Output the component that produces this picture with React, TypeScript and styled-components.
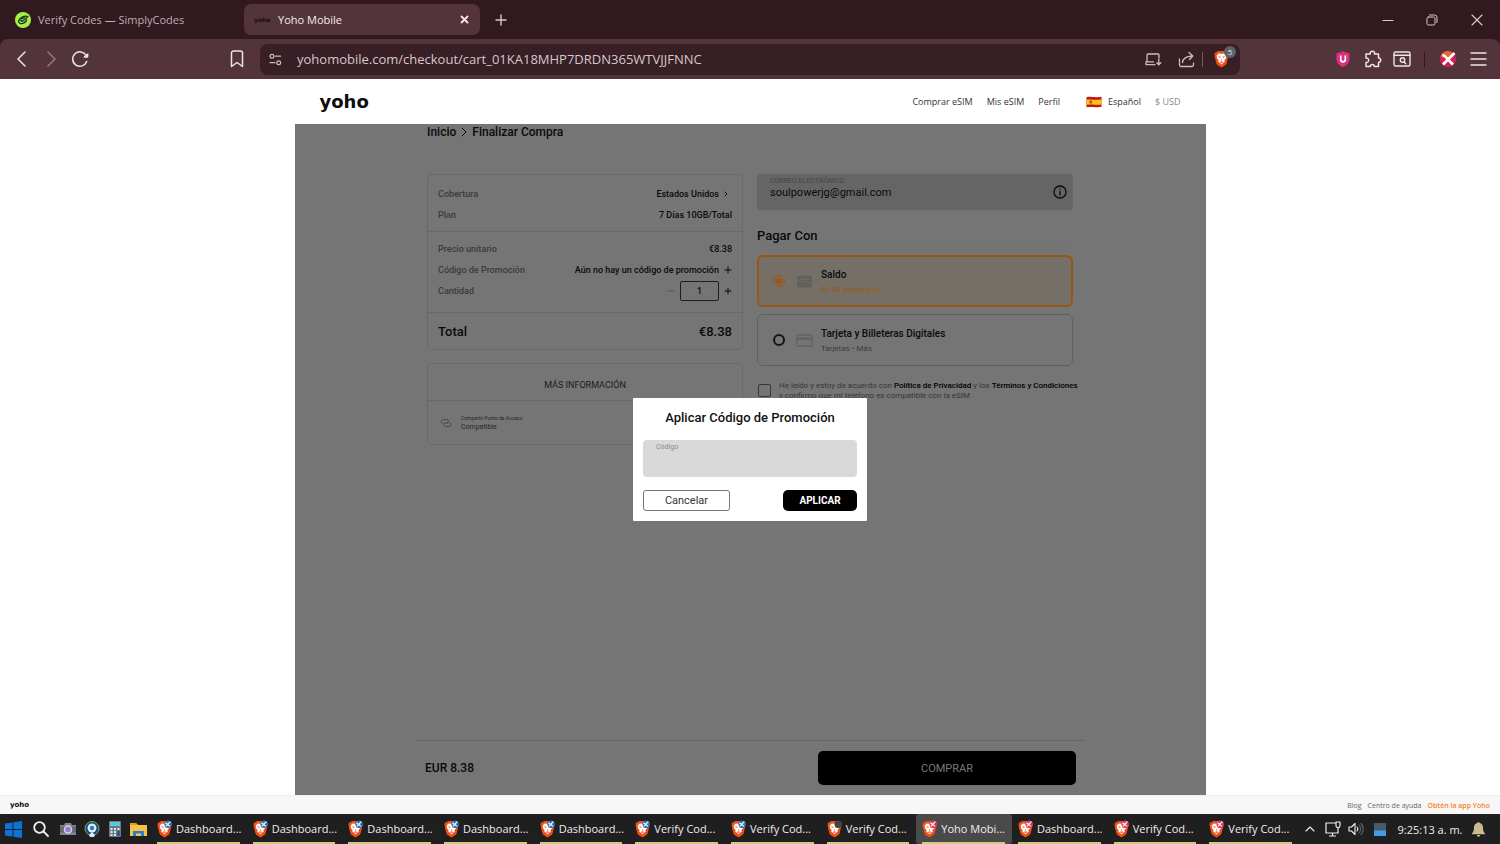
import React from "react";
import styled, { createGlobalStyle } from "styled-components";

const ui = `"Open Sans", "Noto Sans", sans-serif`;
const brand = `Roboto, "Liberation Sans", sans-serif`;

const Global = createGlobalStyle`
  *, *::before, *::after { box-sizing: border-box; }
  body { margin: 0; background: #fff; font-family: ${ui}; }
  button, input { font: inherit; color: inherit; margin: 0; }
  button { background: none; border: 0; padding: 0; cursor: pointer; }
  a { color: inherit; text-decoration: none; }
  svg { display: block; flex: none; }
  p, h1, h2 { margin: 0; }
`;

const Screen = styled.div`
  display: flex;
  flex-direction: column;
  min-height: 100vh;
`;

/* ---------- browser chrome ---------- */

const Chrome = styled.header`
  background: #32191f;
  color: #d9c9cc;
`;

const TabStrip = styled.div`
  display: flex;
  align-items: center;
  height: 39px;
  padding-left: 8px;
`;

const Tab = styled.div<{ $active?: boolean }>`
  display: flex;
  align-items: center;
  gap: ${(p) => (p.$active ? 6 : 7)}px;
  width: 236px;
  height: 31px;
  padding: 0 10px 0 ${(p) => (p.$active ? 10 : 7)}px;
  border-radius: 7px;
  font-size: 11px;
  color: ${(p) => (p.$active ? "#f4ecee" : "#bfaeb2")};
  background: ${(p) => (p.$active ? "#53343a" : "transparent")};
`;

const TabTitle = styled.span`
  flex: 1;
  white-space: nowrap;
`;

const TabLogo = styled.span`
  width: 18px;
  font: 700 6px "DejaVu Sans", sans-serif;
  color: #1b0c10;
`;

const IconButton = styled.button<{ $w?: number; $dim?: boolean }>`
  display: flex;
  align-items: center;
  justify-content: center;
  width: ${(p) => p.$w ?? 30}px;
  height: 30px;
  flex: none;
  opacity: ${(p) => (p.$dim ? 0.4 : 1)};
`;

const Push = styled.div`
  margin-left: auto;
  display: flex;
  align-items: center;
`;

const Toolbar = styled.div`
  display: flex;
  align-items: center;
  height: 40px;
  background: #53343a;
  border-radius: 8px 8px 0 0;
  color: #efe4e6;
`;

const NavGroup = styled.div`
  display: flex;
  align-items: center;
  width: 260px;
  padding: 0 8px 0 7px;
`;

const Address = styled.div`
  display: flex;
  align-items: center;
  flex: 1;
  height: 31px;
  border-radius: 8px;
  background: #371f25;
  color: #cdbdc0;
`;

const AddressInput = styled.input`
  flex: 1;
  min-width: 0;
  padding: 0 0 1px 6px;
  border: 0;
  outline: 0;
  background: none;
  font-size: 13px;
  color: #d6c8cb;
`;

const Divider = styled.span<{ $c: string }>`
  width: 1px;
  height: 15px;
  background: ${(p) => p.$c};
`;

const Shield = styled.button`
  position: relative;
  display: flex;
  width: 37px;
  padding-left: 11px;
`;

const Badge = styled.span`
  position: absolute;
  left: 21px;
  top: -4px;
  width: 12px;
  height: 12px;
  border-radius: 6px;
  background: #5b626b;
  color: #e8e8e8;
  font-size: 8px;
  line-height: 12px;
  text-align: center;
`;

const ExtGroup = styled.div`
  display: flex;
  align-items: center;
  justify-content: flex-end;
  width: 260px;
  padding-right: 7px;
`;

/* ---------- site ---------- */

const Site = styled.div`
  flex: 1;
  display: flex;
  flex-direction: column;
  font-family: ${brand};
`;

const SiteHeader = styled.header`
  display: flex;
  align-items: center;
  width: 100%;
  max-width: 911px;
  height: 45px;
  margin: 0 auto;
  padding: 0 25px;
  font-family: ${ui};
`;

const Wordmark = styled.a<{ $size: number }>`
  font: 700 ${(p) => p.$size}px "DejaVu Sans", sans-serif;
  line-height: 1;
  color: #0c0c0c;
`;

const SiteNav = styled.nav`
  display: flex;
  align-items: center;
  gap: 14px;
  margin-left: auto;
  font-size: 9px;
  color: #333;
`;

const Locale = styled.button`
  display: flex;
  align-items: center;
  gap: 6px;
  margin-left: 12px;
`;

const Currency = styled.button`
  color: #8a8a8a;
`;

/* The checkout sits on a muted sheet while the promotion dialog is open. */
const Stage = styled.main`
  position: relative;
  flex: 1;
  display: flex;
  flex-direction: column;
  width: 100%;
  max-width: 911px;
  margin: 0 auto;
  background: #c3c3c3;
  color: #111;
`;

const Content = styled.div`
  width: 100%;
  max-width: 646px;
  margin: 0 auto;
`;

const Crumbs = styled.nav`
  display: flex;
  align-items: center;
  gap: 5px;
  height: 15px;
  font-size: 12px;
  font-weight: 500;
`;

const Columns = styled.div`
  display: grid;
  grid-template-columns: repeat(2, minmax(0, 1fr));
  gap: 14px;
  align-items: start;
  padding-top: 35px;
`;

const Card = styled.section`
  border: 1px solid #b0b0b0;
  border-radius: 5px;
  margin-bottom: 13px;
`;

const Rows = styled.div`
  padding: 8px 10px 6px;
  border-bottom: 1px solid #b0b0b0;
  & + & { padding: 6px 10px 11px; }
`;

const Row = styled.div`
  display: flex;
  align-items: center;
  justify-content: space-between;
  height: 21px;
  font-size: 9px;
  color: #636363;
  font-weight: 500;
`;

const Value = styled.span`
  display: flex;
  align-items: center;
  gap: 5px;
  color: #111;
`;

const Quantity = styled.input`
  width: 39px;
  height: 20px;
  border: 1px solid #333;
  border-radius: 2px;
  background: none;
  text-align: center;
`;

const TotalRow = styled.div`
  display: flex;
  align-items: center;
  justify-content: space-between;
  height: 36px;
  padding: 0 10px;
  font-size: 13px;
  font-weight: 500;
`;

const InfoHeading = styled.h2`
  height: 37px;
  padding-top: 4px;
  border-bottom: 1px solid #b0b0b0;
  text-align: center;
  font-size: 9px;
  font-weight: 400;
  line-height: 35px;
  color: #333;
`;

const Feature = styled.div`
  display: flex;
  align-items: center;
  gap: 9px;
  height: 43px;
  padding: 0 12px;
  font-size: 7px;
  line-height: 10px;
  color: #444;
`;

const FeatureName = styled.span`
  display: block;
  font-size: 5px;
  line-height: 8px;
`;

const Email = styled.div`
  display: flex;
  align-items: center;
  height: 36px;
  padding: 0 6px 0 13px;
  border-radius: 3px;
  background: #a8a8a8;
`;

const FieldBody = styled.div`
  flex: 1;
  display: flex;
  flex-direction: column;
  align-self: flex-start;
  padding-top: 3px;
`;

const FieldLabel = styled.label<{ $muted?: boolean }>`
  font-size: 7px;
  line-height: 9px;
  color: ${(p) => (p.$muted ? "#737373" : "#8a8a8a")};
`;

const FieldInput = styled.input`
  width: 100%;
  height: 13px;
  padding: 0;
  border: 0;
  outline: 0;
  background: none;
  font-size: 11px;
`;

const PayTitle = styled.h2`
  margin: 18px 0 10px;
  border-bottom: 1px solid #bcbcbc;
  font-size: 13px;
  font-weight: 500;
  line-height: 16px;
`;

const Option = styled.label<{ $on?: boolean }>`
  display: flex;
  align-items: center;
  height: 52px;
  margin-bottom: 7px;
  padding: 0 14px;
  border: ${(p) => (p.$on ? "2px solid #fc921e" : "1px solid #9aa0a1")};
  border-radius: 6px;
  background: ${(p) => (p.$on ? "#c5b9ad" : "transparent")};
  & + & { padding: 0 15px; }
`;

const Radio = styled.input`
  appearance: none;
  width: 12px;
  height: 12px;
  margin-right: 11px;
  border: 2px solid #222;
  border-radius: 6px;
  &:checked {
    border: 1px solid #ff9420;
    background: radial-gradient(circle, #ff9420 3px, transparent 4px);
  }
`;

const OptionText = styled.span`
  display: flex;
  flex-direction: column;
  gap: 3px;
  margin-left: 8px;
  padding-top: 1px;
`;

const OptionTitle = styled.span`
  font-size: 10px;
  font-weight: 500;
  line-height: 13px;
`;

const OptionNote = styled.span<{ $on?: boolean }>`
  font-size: 8px;
  line-height: 12px;
  color: ${(p) => (p.$on ? "#ff9420" : "#666")};
`;

const Terms = styled.label`
  display: flex;
  gap: 8px;
  padding: 8px 0 0 1px;
  font-size: 8px;
  line-height: 10px;
  white-space: nowrap;
  color: #5c5c5c;
  a { font-weight: 500; color: #000; }
`;

const Check = styled.input`
  appearance: none;
  width: 13px;
  height: 13px;
  margin-top: 3px;
  flex: none;
  border: 1px solid #5c5c5c;
  border-radius: 2px;
`;

const BuyBar = styled.div`
  display: flex;
  align-items: center;
  justify-content: space-between;
  width: 100%;
  max-width: 668px;
  height: 55px;
  margin: auto auto 0;
  padding: 0 8px 0 9px;
  border-top: 1px solid #a8a8a8;
  font-size: 12px;
  font-weight: 500;
`;

const Buy = styled.button`
  width: 258px;
  height: 34px;
  border-radius: 5px;
  background: #000;
  color: #c3c3c3;
  font-size: 11px;
  font-weight: 400;
`;

const Backdrop = styled.div`
  position: absolute;
  inset: 0;
  display: flex;
  align-items: center;
  justify-content: center;
  background: rgba(0, 0, 0, 0.4);
`;

const Dialog = styled.form`
  width: 234px;
  padding: 10px;
  border-radius: 1px;
  background: #fff;
`;

const DialogTitle = styled.h1`
  font-size: 13px;
  font-weight: 500;
  line-height: 19px;
  text-align: center;
`;

const CodeField = styled.div`
  display: flex;
  height: 37px;
  margin: 13px 0;
  padding: 0 13px;
  border-radius: 4px;
  background: #d9d9d9;
`;

const Actions = styled.div`
  display: flex;
  justify-content: space-between;
`;

const Cancel = styled.button`
  width: 87px;
  height: 21px;
  border: 1px solid #777;
  border-radius: 3px;
  font-size: 11px;
  color: #333;
`;

const Apply = styled.button`
  width: 74px;
  height: 21px;
  border-radius: 5px;
  background: #000;
  color: #fff;
  font-size: 10px;
  font-weight: 700;
`;

const SiteFooter = styled.footer`
  display: flex;
  align-items: center;
  gap: 6px;
  height: 19px;
  padding: 0 10px;
  border-top: 1px solid #eee;
  background: #f7f7f7;
  font-family: ${ui};
  font-size: 7px;
  color: #666;
`;

const FooterLink = styled.a<{ $accent?: boolean; $first?: boolean }>`
  margin-left: ${(p) => (p.$first ? "auto" : "0")};
  color: ${(p) => (p.$accent ? "#f5821f" : "#666")};
  font-weight: ${(p) => (p.$accent ? 600 : 400)};
`;

/* ---------- taskbar ---------- */

const Taskbar = styled.footer`
  display: flex;
  height: 30px;
  background: #1f1f1f;
  color: #eee;
  font-size: 11px;
`;

const Launchers = styled.div`
  display: flex;
  align-items: center;
  width: 151px;
  padding-left: 1px;
`;

const Windows = styled.div`
  flex: 1;
  min-width: 0;
  display: grid;
  grid-template-columns: repeat(12, minmax(0, 1fr));
`;

const WindowButton = styled.button<{ $active?: boolean }>`
  display: flex;
  padding: 0 7px 0 6px;
  border-radius: 3px;
  background: ${(p) => (p.$active ? "#4a4a4a" : "transparent")};
`;

const WindowLabel = styled.span`
  display: flex;
  align-items: center;
  gap: 4px;
  width: 100%;
  height: 30px;
  padding-top: 1px;
  border-bottom: 2px solid #cfcb7e;
  white-space: nowrap;
`;

const Tray = styled.div`
  display: flex;
  align-items: center;
  width: 201px;
  padding-left: 2px;
`;

const Clock = styled.time`
  width: 70px;
  text-align: center;
  white-space: nowrap;
`;

/* ---------- icons ---------- */

type LineProps = { w?: number; h?: number; box?: string; sw?: number; children: React.ReactNode };
const Line = ({ w = 16, h = 16, box = "0 0 16 16", sw = 1.3, children }: LineProps) => (
  <svg width={w} height={h} viewBox={box} fill="none" stroke="currentColor" strokeWidth={sw} strokeLinecap="round" strokeLinejoin="round" aria-hidden>
    {children}
  </svg>
);

const BraveIcon = ({ mark }: { mark?: string }) => (
  <svg width="15" height="18" viewBox="0 0 14 17" aria-hidden>
    <path d="M3.6 1h6.8l1.1 1.2 1.3-.1.9 1.8-.4 1.3.2.8-1.6 6.3c-.3 1-.8 1.5-1.5 2L7 16.6l-3.4-2.3c-.7-.5-1.2-1-1.5-2L.5 6l.2-.8L.3 3.9l.9-1.8 1.3.1z" fill="#f04e16" />
    <path d="M4.300 3.200L7 3.600l2.700-.4 2 2.300-.5 1 .2 1-1.700 2.200.3 1.300-1.500 1.100L7 13.800l-1.500-1.700L4 11l.3-1.300-1.700-2.200.2-1-.5-1z" fill="#fff" />
    <path d="M4 6.100l2.100.4-.6.900zM10 6.100l-2.100.4.6.900zM6.400 9.200h1.200L7 10zM5.600 11.300L7 10.900l1.400.4-1.400.9z" fill="#f04e16" stroke="#f04e16" strokeWidth=".3" />
    {mark && (
      <g>
        <circle cx="10.500" cy="4" r="3.500" fill={mark} />
        {mark !== "#444" && <path d="M8 2.600l4.200 3.400M12.500 1.500L8.300 6" stroke="#fff" strokeWidth="1.100" />}
      </g>
    )}
  </svg>
);

const SimplyIcon = () => (
  <svg width="16" height="16" viewBox="0 0 16 16" fill="none" aria-hidden>
    <circle cx="8" cy="8" r="8" fill="#a4f04a" />
    <path d="M13 4.500c-2-.6-5-.3-7.300 1.500C3.500 7.800 2.800 10.500 5 11.300c2.500.8 6-.8 6.500-3.300M5.500 8.300l1.700 1.200L12 5.500M6.500 7l3-1.500" stroke="#17351b" strokeWidth="1.300" strokeLinecap="round" />
  </svg>
);

const Flag = () => (
  <svg width="16" height="12" viewBox="0 0 16 12" aria-hidden>
    <path d="M.5 1.200C4 0 8 2 15.500.8v10C11 12 8 10.200.5 11.200z" fill="#c8151d" />
    <path d="M.5 3.800C4 2.800 8 4.500 15.500 3.400v5C11 9.300 8 7.800.5 8.700z" fill="#fbc50f" />
    <path d="M3.500 4.500h2.600v3H3.500z" fill="#b5582a" />
  </svg>
);

const Plus = () => <Line w={8} h={8} box="0 0 8 8" sw={1}><path d="M4 1v6M1 4h6" /></Line>;
const Minus = () => <Line w={8} h={8} box="0 0 8 8" sw={1}><path d="M1 4h6" stroke="#8f8f8f" /></Line>;

const WalletIcon = () => (
  <svg width="17" height="13" viewBox="0 0 17 13" aria-hidden>
    <rect x="1" y=".5" width="15" height="12" rx="2.500" fill="#a3a19e" />
    <path d="M2.500 4h12M2.500 6.500h7l1.500 1h3.500" stroke="#bcb5ad" fill="none" />
  </svg>
);

const CardIcon = () => (
  <svg width="17" height="13" viewBox="0 0 17 13" fill="none" stroke="#a3a3a3" aria-hidden>
    <rect x="1" y="1" width="15" height="11" rx="1" strokeWidth="1.300" />
    <path d="M1 4.500h15" strokeWidth="2.500" />
  </svg>
);

const LinkIcon = () => (
  <Line w={12} h={10} box="0 0 12 10" sw={0.8}>
    <path d="M10 4.500c1.500 1.500.5 4-1.500 4h-3c-2 0-2.700-2.800-1-3.500h3.500M2 5.500c-1.500-1.500-.5-4 1.500-4h3c2 0 2.700 2.800 1 3.500" stroke="#6a6a6a" />
  </Line>
);

const tasks: { name: string; mark: string; active?: boolean }[] = [
  ...Array.from({ length: 5 }, () => ({ name: "Dashboard...", mark: "#2a6fb5" })),
  { name: "Verify Cod...", mark: "#2a6fb5" },
  { name: "Verify Cod...", mark: "#2a6fb5" },
  { name: "Verify Cod...", mark: "#444" },
  { name: "Yoho Mobi...", mark: "#d63a5e", active: true },
  { name: "Dashboard...", mark: "#d63a5e" },
  { name: "Verify Cod...", mark: "#d63a5e" },
  { name: "Verify Cod...", mark: "#d63a5e" },
];

const BrowserChrome = () => (
  <Chrome>
    <TabStrip>
      <Tab><SimplyIcon /><TabTitle>Verify Codes — SimplyCodes</TabTitle></Tab>
      <Tab $active>
        <TabLogo>yoho</TabLogo>
        <TabTitle>Yoho Mobile</TabTitle>
        <IconButton $w={11} aria-label="Cerrar pestaña"><Line w={9} h={9} box="0 0 9 9" sw={1.800}><path d="M1.500 1.500l6 6M7.500 1.500l-6 6" /></Line></IconButton>
      </Tab>
      <IconButton $w={42} aria-label="Nueva pestaña"><Line w={12} h={12} box="0 0 12 12" sw={1.4}><path d="M6 1v10M1 6h10" /></Line></IconButton>
      <Push>
        <IconButton $w={44} aria-label="Minimizar"><Line w={12} h={12} box="0 0 12 12" sw={1}><path d="M1 6.500h10" /></Line></IconButton>
        <IconButton $w={44} aria-label="Restaurar"><Line w={12} h={12} box="0 0 12 12" sw={1}><rect x="1" y="3" width="8" height="8" rx="1.500" /><path d="M3.500 1h5a2.500 2.500 0 0 1 2.500 2.500v5" /></Line></IconButton>
        <IconButton $w={46} aria-label="Cerrar"><Line w={12} h={12} box="0 0 12 12" sw={1.1}><path d="M1 1l10 10M11 1L1 11" /></Line></IconButton>
      </Push>
    </TabStrip>
    <Toolbar>
      <NavGroup>
        <IconButton $w={29} aria-label="Atrás"><Line sw={1.5}><path d="M11 1L4 8l7 7" /></Line></IconButton>
        <IconButton $w={29} $dim aria-label="Adelante"><Line sw={1.500}><path d="M5 1l7 7-7 7" /></Line></IconButton>
        <IconButton $w={29} aria-label="Recargar"><Line w={18} h={18} box="0 0 18 18" sw={1.5}><path d="M15.700 11.500A7.200 7.200 0 1 1 15.200 5.500" /><path d="M13.300 7h3.200l.3-2.800z" fill="currentColor" /></Line></IconButton>
        <Push><IconButton aria-label="Marcador"><Line w={14} h={18} box="0 0 14 18" sw={1.5}><path d="M1.500 3a2 2 0 0 1 2-2h7a2 2 0 0 1 2 2v13.500L7 12.500l-5.500 4z" /></Line></IconButton></Push>
      </NavGroup>
      <Address>
        <IconButton $w={31} aria-label="Información del sitio"><Line w={13} h={13} box="0 0 13 13" sw={1.2}><circle cx="3" cy="3.200" r="1.900" /><path d="M6.500 3.200h5M1 9.700h5" /><circle cx="9.700" cy="9.700" r="1.900" /></Line></IconButton>
        <AddressInput aria-label="Dirección" defaultValue="yohomobile.com/checkout/cart_01KA18MHP7DRDN365WTVJJFNNC" />
        <IconButton $w={34} aria-label="Instalar"><Line w={17} h={13} box="0 0 17 13" sw={1.3}><path d="M2 8.500V2a1 1 0 0 1 1-1h10a1 1 0 0 1 1 1v3M1 11.500V8.800h7.500M1 11.700h9M13.800 6.500v5M11.800 9.800l2 2 2-2" /></Line></IconButton>
        <IconButton $w={32} aria-label="Compartir"><Line w={17} h={17} box="0 0 17 17" sw={1.3}><path d="M1.500 8v6a1.500 1.500 0 0 0 1.500 1.500h11a1.500 1.500 0 0 0 1.500-1.500v-2M4.500 11.500c.3-4 3-6 9.500-6.500M11 1.500L14.800 5 11.500 8.500" /></Line></IconButton>
        <Divider $c="#76595f" />
        <Shield aria-label="Brave Shields"><BraveIcon /><Badge>5</Badge></Shield>
      </Address>
      <ExtGroup>
        <IconButton aria-label="uBlock"><svg width="14" height="16" viewBox="0 0 14 16" aria-hidden><path d="M7 0c2 1.500 4 2 6.500 2.200V8c0 4-3 6.500-6.500 8C3.500 14.500.500 12 .500 8V2.200C3 2 5 1.500 7 0z" fill="#dd2f7f" /><path d="M4.700 4.500v4a2.300 2.300 0 0 0 4.600 0v-4" fill="none" stroke="#fff" strokeWidth="1.700" /></svg></IconButton>
        <IconButton aria-label="Extensiones"><Line w={18} h={18} box="0 0 18 18" sw={1.5}><path d="M2 4h4.300a2.200 2.200 0 1 1 4.200 0H14.500V8a2.200 2.200 0 1 1 0 4.400V16.500H10.300a2 2 0 1 0-4 0H2v-4.100a2.200 2.200 0 1 0 0-4.300z" /></Line></IconButton>
        <IconButton $w={28} aria-label="Buscar en pestañas"><Line w={18} h={16} box="0 0 18 16" sw={1.4}><rect x="1" y="1" width="16" height="14" rx="1.500" /><path d="M1 4.300h16M11.300 11.300l1.500 1.500" /><circle cx="9.500" cy="9" r="2.200" /></Line></IconButton>
        <IconButton as="span" $w={17}><Divider $c="#32191f" /></IconButton>
        <IconButton aria-label="Perfil"><svg width="16" height="16" viewBox="0 0 16 16" aria-hidden><circle cx="8" cy="8" r="8" fill="#cf2458" /><path d="M8 0a8 8 0 0 0-7.500 5.500L7 8l6-5.500A8 8 0 0 0 8 0z" fill="#ea6a2f" /><path d="M2.500 4c3 .5 5 4.500 10.500 9.500M14.500 2L3 13.500" stroke="#fff" strokeWidth="2.600" fill="none" /></svg></IconButton>
        <IconButton aria-label="Menú"><Line w={17} h={14} box="0 0 17 14" sw={1.3}><path d="M1 1h15M1 7h15M1 13h15" /></Line></IconButton>
      </ExtGroup>
    </Toolbar>
  </Chrome>
);

const Summary = () => (
  <div>
    <Card>
      <Rows>
        <Row>Cobertura <Value>Estados Unidos <Line w={8} h={8} box="0 0 8 8" sw={1}><path d="M1 2l2 2-2 2" /></Line></Value></Row>
        <Row>Plan <Value>7 Días 10GB/Total</Value></Row>
      </Rows>
      <Rows>
        <Row>Precio unitario <Value>€8.38</Value></Row>
        <Row>Código de Promoción <Value>Aún no hay un código de promoción <button type="button" aria-label="Añadir código"><Plus /></button></Value></Row>
        <Row>
          <label htmlFor="qty">Cantidad</label>
          <Value>
            <button type="button" aria-label="Menos"><Minus /></button>
            <Quantity id="qty" defaultValue="1" />
            <button type="button" aria-label="Más"><Plus /></button>
          </Value>
        </Row>
      </Rows>
      <TotalRow><span>Total</span><span>€8.38</span></TotalRow>
    </Card>
    <Card>
      <InfoHeading>MÁS INFORMACIÓN</InfoHeading>
      <Feature><LinkIcon /><div><FeatureName>Compartir Punto de Acceso</FeatureName>Compatible</div></Feature>
    </Card>
  </div>
);

const Payment = () => (
  <div>
    <Email>
      <FieldBody>
        <FieldLabel htmlFor="email" $muted>CORREO ELECTRÓNICO</FieldLabel>
        <FieldInput id="email" type="email" defaultValue="soulpowerjg@gmail.com" />
      </FieldBody>
      <Line w={14} h={14} box="0 0 14 14" sw={1.3}><circle cx="7" cy="7" r="6" /><path d="M7 6.500v3.500M7 4v.2" /></Line>
    </Email>
    <PayTitle>Pagar Con</PayTitle>
    <Option $on>
      <Radio type="radio" name="pay" defaultChecked />
      <WalletIcon />
      <OptionText><OptionTitle>Saldo</OptionTitle><OptionNote $on>$0.00 disponible</OptionNote></OptionText>
    </Option>
    <Option>
      <Radio type="radio" name="pay" />
      <CardIcon />
      <OptionText><OptionTitle>Tarjeta y Billeteras Digitales</OptionTitle><OptionNote>Tarjetas • Más</OptionNote></OptionText>
    </Option>
    <Terms>
      <Check type="checkbox" />
      <span>He leído y estoy de acuerdo con <a href="#privacidad">Política de Privacidad</a> y los <a href="#terminos">Términos y Condiciones</a><br />y confirmo que mi teléfono es compatible con la eSIM</span>
    </Terms>
  </div>
);

const PromoDialog = () => (
  <Backdrop>
    <Dialog role="dialog" aria-labelledby="promo-title">
      <DialogTitle id="promo-title">Aplicar Código de Promoción</DialogTitle>
      <CodeField>
        <FieldBody>
          <FieldLabel htmlFor="code">Código</FieldLabel>
          <FieldInput id="code" />
        </FieldBody>
      </CodeField>
      <Actions>
        <Cancel type="button">Cancelar</Cancel>
        <Apply type="button">APLICAR</Apply>
      </Actions>
    </Dialog>
  </Backdrop>
);

const SystemBar = () => (
  <Taskbar>
    <Launchers>
      <IconButton $w={25} aria-label="Inicio"><svg width="17" height="17" viewBox="0 0 17 17" fill="#0a74d8" aria-hidden><path d="M0 2.500l7.500-1V8H0zM8.500 1.300L17 0v8H8.500zM0 9h7.500v6.500L0 14.500zM8.500 9H17v8l-8.500-1.300z" /></svg></IconButton>
      <IconButton $w={29} aria-label="Buscar"><Line sw={1.800}><circle cx="6.500" cy="6.500" r="5.300" /><path d="M10.500 10.500l4.500 4.500" /></Line></IconButton>
      <IconButton $w={25} aria-label="Cámara"><svg width="16" height="14" viewBox="0 0 16 14" aria-hidden><path d="M0 3h4l1-2h6l1 2h4v10H0z" fill="#7d8890" /><path d="M0 4.500h16v6H0z" fill="#5f6a73" /><circle cx="8" cy="7.500" r="4.300" fill="#d5d2ea" /><circle cx="8" cy="7.500" r="2.800" fill="#9a7bd0" /></svg></IconButton>
      <IconButton $w={23} aria-label="Webcam"><svg width="16" height="16" viewBox="0 0 16 16" aria-hidden><circle cx="8" cy="7.500" r="7" fill="#164b70" stroke="#7fa06a" /><circle cx="8" cy="7" r="4.500" fill="#dcebf5" /><circle cx="8" cy="7" r="2.200" fill="#1f7dc0" /><path d="M5 14l3-3 3 3-1 2H6z" fill="#dcebf5" /></svg></IconButton>
      <IconButton $w={23} aria-label="Calculadora"><svg width="12" height="16" viewBox="0 0 12 16" aria-hidden><rect width="12" height="16" rx="1" fill="#6c7a85" /><path d="M1 1h10v4H1z" fill="#5fc4df" /><path d="M1.500 7h2v2h-2zM5 7h2v2H5zM8.500 7h2v2h-2zM1.500 10h2v2h-2zM5 10h2v2H5zM1.500 13h2v2h-2zM5 13h2v2H5z" fill="#dfe5ea" /><path d="M8.500 10h2v5h-2z" fill="#1d4f8c" /></svg></IconButton>
      <IconButton $w={25} aria-label="Explorador"><svg width="17" height="15" viewBox="0 0 17 15" aria-hidden><path d="M0 1h6l2 2h9v11H0z" fill="#f6c344" /><path d="M0 1h6l1 2H0z" fill="#e09f1f" /><path d="M3 9h11v5H3z" fill="#2580c9" /><path d="M6 11.500h5V14H6z" fill="#f6c344" /></svg></IconButton>
    </Launchers>
    <Windows>
      {tasks.map((t, i) => (
        <WindowButton key={i} $active={t.active}>
          <WindowLabel><BraveIcon mark={t.mark} />{t.name}</WindowLabel>
        </WindowButton>
      ))}
    </Windows>
    <Tray>
      <IconButton $w={18} aria-label="Iconos ocultos"><Line w={10} h={6} box="0 0 10 6" sw={1.100}><path d="M1 5l4-4 4 4" /></Line></IconButton>
      <IconButton $w={28} aria-label="Red"><Line w={16} h={16} box="0 0 16 16" sw={1.200}><path d="M10 2H1v10h12V8M4.500 15h6M7.500 12v3M11 1h4v4l-1 1.500h-2L11 5zM13 6.500V9" /></Line></IconButton>
      <IconButton $w={18} aria-label="Volumen"><Line w={16} h={14} box="0 0 16 14" sw={1.100}><path d="M1 5h2.500L7 1.500v11L3.500 9H1zM9 5a3 3 0 0 1 0 4" /><path d="M11 3a6 6 0 0 1 0 8M13 1.500a8 8 0 0 1 0 11" opacity=".35" /></Line></IconButton>
      <IconButton $w={30} aria-label="Monitor"><svg width="12" height="13" viewBox="0 0 12 13" aria-hidden><path d="M0 0h12v13H0z" fill="#4a5966" /><path d="M0 7.500h12V13H0z" fill="#3f9ee8" /></svg></IconButton>
      <Clock>9:25:13 a. m.</Clock>
      <IconButton $w={26} aria-label="Notificaciones"><svg width="13" height="15" viewBox="0 0 13 15" fill="#c9bd8e" aria-hidden><path d="M6.500 0a1 1 0 0 1 1 1c2.200.4 3.500 2 3.500 4.500 0 3 .5 4.500 2 6v.8H0v-.8c1.500-1.500 2-3 2-6C2 3 3.300 1.400 5.500 1a1 1 0 0 1 1-1zM4.800 13h3.400a1.700 1.700 0 0 1-3.400 0z" /></svg></IconButton>
    </Tray>
  </Taskbar>
);

export default function App() {
  return (
    <Screen>
      <Global />
      <BrowserChrome />
      <Site>
        <SiteHeader>
          <Wordmark href="#inicio" $size={18}>yoho</Wordmark>
          <SiteNav>
            <a href="#comprar">Comprar eSIM</a>
            <a href="#mis-esim">Mis eSIM</a>
            <a href="#perfil">Perfil</a>
            <Locale><Flag />Español</Locale>
            <Currency>$ USD</Currency>
          </SiteNav>
        </SiteHeader>
        <Stage>
          <Content>
            <Crumbs>
              <a href="#inicio">Inicio</a>
              <Line w={6} h={10} box="0 0 6 10" sw={1}><path d="M1 1l4 4-4 4" /></Line>
              <span>Finalizar Compra</span>
            </Crumbs>
            <Columns><Summary /><Payment /></Columns>
          </Content>
          <BuyBar><span>EUR 8.38</span><Buy>COMPRAR</Buy></BuyBar>
          <PromoDialog />
        </Stage>
        <SiteFooter>
          <Wordmark href="#inicio" $size={7}>yoho</Wordmark>
          <FooterLink href="#blog" $first>Blog</FooterLink>
          <FooterLink href="#ayuda">Centro de ayuda</FooterLink>
          <FooterLink href="#app" $accent>Obtén la app Yoho</FooterLink>
        </SiteFooter>
      </Site>
      <SystemBar />
    </Screen>
  );
}
